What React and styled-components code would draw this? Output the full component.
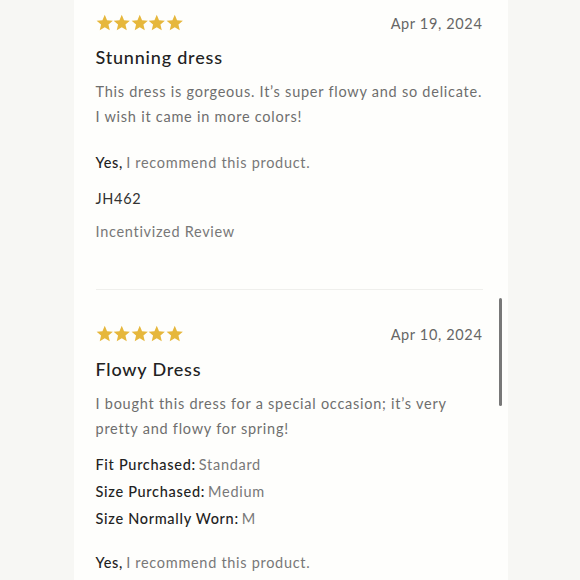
import React from "react";
import styled, { createGlobalStyle } from "styled-components";

const Global = createGlobalStyle`
  html, body { margin: 0; padding: 0; background: #f7f7f4; }
  body { font-family: "Lato", "Noto Sans", sans-serif; -webkit-font-smoothing: antialiased; }
`;

const Page = styled.div`
  width: 580px;
  height: 580px;
  overflow: hidden;
  display: flex;
  justify-content: center;
  background: #f7f7f4;
`;

const Card = styled.div`
  position: relative;
  width: 434px;
  margin-left: 1px;
  box-sizing: border-box;
  padding: 14px 25px 0 22px;
  background: #fefefc;
`;

const Review = styled.section`
  display: flex;
  flex-direction: column;
  margin-top: ${(p) => p.$mt || 0}px;
`;

const Header = styled.div`
  display: flex;
  justify-content: space-between;
  align-items: center;
  height: 18px;
`;

const Stars = styled.div`
  display: flex;
`;

const DateText = styled.span`
  font-size: 14.5px;
  letter-spacing: 0.65px;
  color: #666;
`;

const Title = styled.h3`
  margin: ${(p) => p.$mt}px 0 0;
  font-size: 18px;
  line-height: 24px;
  font-weight: 500;
  letter-spacing: 0.8px;
  color: #222;
`;

const Body = styled.p`
  margin: ${(p) => p.$mt}px 0 0;
  font-size: 14.5px;
  line-height: 25px;
  letter-spacing: 0.75px;
  color: #6e6e6e;
`;

const Line = styled.div`
  margin-top: ${(p) => p.$mt}px;
  font-size: 14.5px;
  line-height: ${(p) => p.$lh || 22}px;
  letter-spacing: 0.7px;
  color: ${(p) => p.$color || "#787878"};
`;

const Strong = styled.span`
  color: #222;
  font-weight: 500;
  margin-right: 3px;
`;

const Divider = styled.hr`
  margin: 46px 0 0;
  border: none;
  border-top: 1px solid #efefec;
`;

const Scrollbar = styled.div`
  position: absolute;
  left: 425px;
  top: 298px;
  width: 3px;
  height: 108px;
  border-radius: 2px;
  background: #787878;
`;

const Star = () => (
  <svg width="17.5" height="17.5" viewBox="0 0 24 24">
    <path
      d="M12 1l3.15 7.4 8 .7-6.1 5.3 1.85 7.8L12 18.1l-6.9 4.1 1.85-7.8L.85 9.1l8-.7z"
      fill="#e6b73c"
    />
  </svg>
);

const FiveStars = () => (
  <Stars>
    {[0, 1, 2, 3, 4].map((i) => (
      <Star key={i} />
    ))}
  </Stars>
);

export default function App() {
  return (
    <Page>
      <Global />
      <Card>
        <Review>
          <Header>
            <FiveStars />
            <DateText>Apr 19, 2024</DateText>
          </Header>
          <Title $mt={13}>Stunning dress</Title>
          <Body $mt={9.5}>
            This dress is gorgeous. It’s super flowy and so delicate. I wish it
            came in more colors!
          </Body>
          <Line $mt={23.5}>
            <Strong>Yes,</Strong>I recommend this product.
          </Line>
          <Line $mt={14} $color="#333">JH462</Line>
          <Line $mt={11}>Incentivized Review</Line>
        </Review>
        <Divider />
        <Review $mt={35}>
          <Header>
            <FiveStars />
            <DateText>Apr 10, 2024</DateText>
          </Header>
          <Title $mt={14}>Flowy Dress</Title>
          <Body $mt={10}>
            I bought this dress for a special occasion; it’s very pretty and
            flowy for spring!
          </Body>
          <Line $mt={9.5} $lh={27}>
            <Strong>Fit Purchased:</Strong>Standard
          </Line>
          <Line $mt={0} $lh={27}>
            <Strong>Size Purchased:</Strong>Medium
          </Line>
          <Line $mt={0} $lh={27}>
            <Strong>Size Normally Worn:</Strong>M
          </Line>
          <Line $mt={20}>
            <Strong>Yes,</Strong>I recommend this product.
          </Line>
        </Review>
        <Scrollbar />
      </Card>
    </Page>
  );
}
